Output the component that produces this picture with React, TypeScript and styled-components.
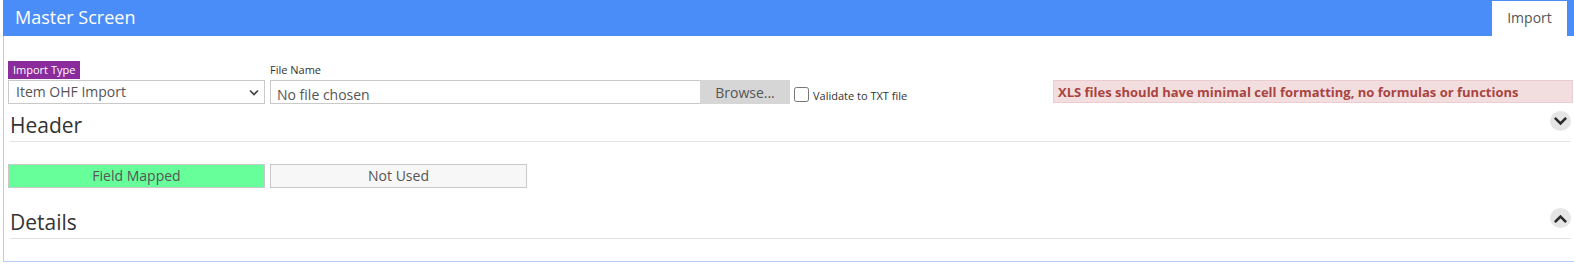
import React from "react";
import styled, { createGlobalStyle } from "styled-components";

const GlobalStyle = createGlobalStyle`
  html, body { margin: 0; padding: 0; background: #fff; }
  body { font-family: "Open Sans", "Liberation Sans", sans-serif; color: #333; overflow: hidden; }
  * { box-sizing: border-box; }
`;

const Page = styled.div`
  padding-left: 3px;
  width: 1574px;
`;

const Panel = styled.section`
  display: flex;
  flex-direction: column;
`;

const TitleBar = styled.header`
  height: 36px;
  background: #4b8df8;
  display: flex;
  align-items: flex-start;
  justify-content: space-between;
`;

const Caption = styled.h1`
  margin: 0;
  padding: 0 0 2px 12px;
  font-size: 18px;
  font-weight: 400;
  line-height: 34px;
  color: #fff;
`;

const Tab = styled.div`
  margin: 1px 7px 0 0;
  height: 35px;
  width: 75px;
  background: #fff;
  color: #555;
  font-size: 14px;
  line-height: 34px;
  text-align: center;
`;

const Body = styled.div`
  border-left: 1px solid #b4cef8;
  border-bottom: 1px solid #b4cef8;
  background: #fff;
  padding: 25px 0 22px 0;
  display: flex;
  flex-direction: column;
`;

const FormRow = styled.div`
  display: flex;
  align-items: flex-end;
  gap: 5px;
  padding: 0 1px 0 4px;
`;

const Field = styled.div<{ $width?: number }>`
  display: flex;
  flex-direction: column;
  align-items: flex-start;
  ${(p) => (p.$width ? `width: ${p.$width}px;` : "")}
`;

const TypeLabel = styled.span`
  height: 18px;
  line-height: 18px;
  padding: 0 5px;
  font-size: 11px;
  color: #fff;
  background: #8a2c9c;
  margin-bottom: 1px;
`;

const PlainLabel = styled.span`
  height: 18px;
  line-height: 18px;
  font-size: 11px;
  color: #333;
  margin-bottom: 1px;
`;

const SelectBox = styled.div`
  width: 100%;
  height: 24px;
  border: 1px solid #c9c9c9;
  display: flex;
  align-items: center;
  justify-content: space-between;
  padding: 0 5px 0 7px;
  font-size: 14px;
  color: #555;
  line-height: 22px;
`;

const FileLine = styled.div`
  display: flex;
  align-items: center;
`;

const FileBox = styled.div`
  width: 520px;
  height: 24px;
  border: 1px solid #c9c9c9;
  display: flex;
  align-items: stretch;
`;

const FileText = styled.span`
  flex: 1;
  padding: 3px 0 0 6px;
  font-size: 14px;
  line-height: 21px;
  color: #555;
`;

const BrowseButton = styled.span`
  width: 90px;
  margin: -1px -1px -1px 0;
  background: #d6d6d6;
  font-size: 14px;
  color: #555;
  text-align: center;
  padding-top: 2px;
  line-height: 22px;
`;

const Check = styled.input`
  width: 15px;
  height: 15px;
  margin: 0 4px 0 4px;
  position: relative;
  top: 2px;
`;

const CheckText = styled.span`
  font-size: 11px;
  color: #333;
  padding-top: 8px;
  line-height: 16px;
`;

const Alert = styled.div`
  margin-left: auto;
  margin-bottom: 1px;
  width: 520px;
  height: 23px;
  background: #f2dede;
  border: 1px solid #ebccd1;
  color: #a94442;
  font-size: 13px;
  font-weight: 700;
  line-height: 21px;
  padding: 1px 0 0 4px;
  white-space: nowrap;
`;

const SectionHead = styled.div<{ $gap: number }>`
  margin: ${(p) => p.$gap}px 3px 0 6px;
  height: 32px;
  padding-bottom: 1px;
  border-bottom: 1px solid #e3e3e3;
  display: flex;
  align-items: flex-start;
  justify-content: space-between;
`;

const SectionTitle = styled.h2`
  margin: 0;
  font-size: 21px;
  font-weight: 400;
  line-height: 30px;
  color: #333;
`;

const Toggle = styled.button`
  margin-top: 1px;
  width: 21px;
  height: 20px;
  border: 0;
  border-radius: 50%;
  padding: 0;
  background: #e5e5e5;
  display: flex;
  align-items: center;
  justify-content: center;
`;

const Legend = styled.div`
  margin-top: 22px;
  padding-left: 4px;
  display: flex;
  gap: 5px;
`;

const LegendItem = styled.div<{ $bg: string }>`
  width: 257px;
  height: 24px;
  border: 1px solid #c9c9c9;
  background: ${(p) => p.$bg};
  color: #555;
  font-size: 14px;
  line-height: 22px;
  text-align: center;
`;

const Chevron = ({ up }: { up?: boolean }) => (
  <svg width="13" height="9" viewBox="0 0 13 9">
    <polyline
      points={up ? "1.8,7.2 6.5,2.5 11.2,7.2" : "1.8,1.8 6.5,6.5 11.2,1.8"}
      fill="none"
      stroke="#2b2b2b"
      strokeWidth="2.6"
      strokeLinecap="square"
    />
  </svg>
);

const SelectArrow = () => (
  <svg width="10" height="7" viewBox="0 0 10 7">
    <polyline points="1,1.5 5,5.5 9,1.5" fill="none" stroke="#444" strokeWidth="1.7" />
  </svg>
);

export default function App() {
  return (
    <>
      <GlobalStyle />
      <Page>
        <Panel>
          <TitleBar>
            <Caption>Master Screen</Caption>
            <Tab>Import</Tab>
          </TitleBar>
          <Body>
            <FormRow>
              <Field $width={257}>
                <TypeLabel>Import Type</TypeLabel>
                <SelectBox>
                  <span>Item OHF Import</span>
                  <SelectArrow />
                </SelectBox>
              </Field>
              <Field>
                <PlainLabel>File Name</PlainLabel>
                <FileLine>
                  <FileBox>
                    <FileText>No file chosen</FileText>
                    <BrowseButton>Browse...</BrowseButton>
                  </FileBox>
                  <Check type="checkbox" />
                  <CheckText>Validate to TXT file</CheckText>
                </FileLine>
              </Field>
              <Alert>XLS files should have minimal cell formatting, no formulas or functions</Alert>
            </FormRow>
            <SectionHead $gap={6}>
              <SectionTitle>Header</SectionTitle>
              <Toggle aria-label="collapse">
                <Chevron />
              </Toggle>
            </SectionHead>
            <Legend>
              <LegendItem $bg="#66ff99">Field Mapped</LegendItem>
              <LegendItem $bg="#f7f7f7">Not Used</LegendItem>
            </Legend>
            <SectionHead $gap={19}>
              <SectionTitle>Details</SectionTitle>
              <Toggle aria-label="expand">
                <Chevron up />
              </Toggle>
            </SectionHead>
          </Body>
        </Panel>
      </Page>
    </>
  );
}
